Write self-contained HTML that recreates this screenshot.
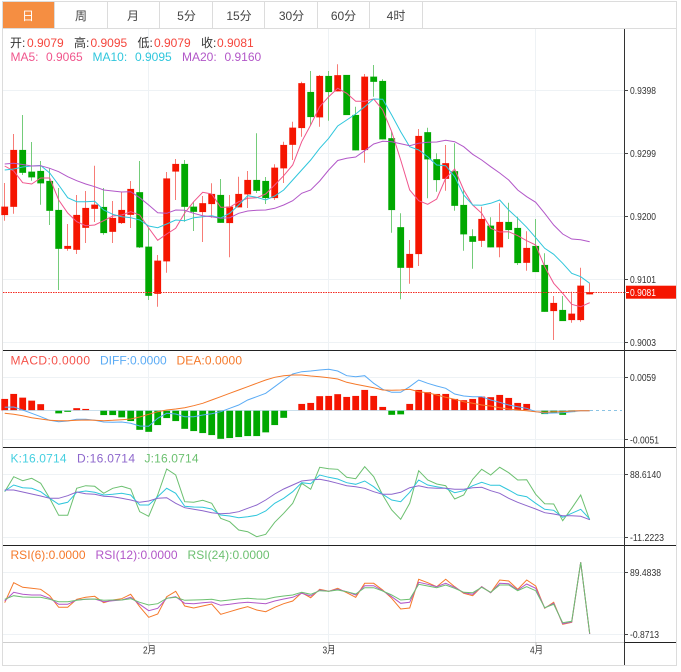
<!DOCTYPE html>
<html><head><meta charset="utf-8"><style>
html,body{margin:0;padding:0;background:#fff;width:681px;height:672px;overflow:hidden}
svg{display:block}
text{font-family:"Liberation Sans","Noto Sans CJK SC",sans-serif}
.l{font-size:12px}
.a{font-size:10px;fill:#333}
.t{font-size:12px;fill:#444;text-anchor:middle}
polyline{fill:none;stroke-width:1}
</style></head><body>
<svg width="681" height="672" viewBox="0 0 681 672" xmlns="http://www.w3.org/2000/svg">
<rect width="681" height="672" fill="#fff"/>
<!-- tabs -->
<rect x="3" y="2" width="51" height="26" fill="#f58e42"/>
<path d="M2.5 1.5H676.5V665.5H2.5ZM2.5 28.5H676.5M54.5 2V28M107.5 2V28M159.5 2V28M212.5 2V28M264.5 2V28M317.5 2V28M369.5 2V28M422.5 2V28" fill="none" stroke="#dcdcdc" stroke-width="1"/>
<text class="t" x="28" y="20" style="fill:#fff">日</text>
<text class="t" x="81" y="20">周</text>
<text class="t" x="133" y="20">月</text>
<text class="t" x="186.5" y="20">5分</text>
<text class="t" x="239" y="20">15分</text>
<text class="t" x="291.5" y="20">30分</text>
<text class="t" x="343.5" y="20">60分</text>
<text class="t" x="396" y="20">4时</text>
<!-- grid -->
<path d="M3 90.5H624M3 153.5H624M3 216.5H624M3 279.5H624M3 342.5H624M3 377.5H624M3 439.5H624M3 474.5H624M3 537.5H624M3 572.5H624M3 634.5H624M148.5 29V642M328.5 29V642M535.5 29V642" stroke="#eef2f5" fill="none"/>
<!-- legend -->
<text class="l" x="10" y="47" fill="#333">开:</text><text class="l" x="27" y="47" fill="#f5453c">0.9079</text>
<text class="l" x="74" y="47" fill="#333">高:</text><text class="l" x="90.5" y="47" fill="#f5453c">0.9095</text>
<text class="l" x="137.5" y="47" fill="#333">低:</text><text class="l" x="154" y="47" fill="#f5453c">0.9079</text>
<text class="l" x="201" y="47" fill="#333">收:</text><text class="l" x="217" y="47" fill="#f5453c">0.9081</text>
<text class="l" x="10.5" y="61" fill="#f0558c">MA5:</text><text class="l" x="46" y="61" fill="#f0558c">0.9065</text>
<text class="l" x="92.5" y="61" fill="#2fc6dc">MA10:</text><text class="l" x="135" y="61" fill="#2fc6dc">0.9095</text>
<text class="l" x="182" y="61" fill="#b257c8">MA20:</text><text class="l" x="224.5" y="61" fill="#b257c8">0.9160</text>
<!-- wicks red -->
<path stroke="#f77c76" fill="none" d="M4.5 183V220.7M13.5 134V213.7M67.5 224V250.7M76.5 195V254M85.5 191V243M94.5 165.7V222M112.5 201V243M121.5 192V224M130.5 181V228M157.5 255V306.7M166.5 172V272.7M175.5 159V200M202.5 196V242M211.5 183.3V217.7M229.5 195V257.3M238.5 176.7V207.3M247.5 171V208M274.5 164.3V200M283.5 141.7V183M292.5 121.7V160M301.5 81.7V136.7M319.5 75V126.7M337.5 64.3V91.3M364.5 74V162.7M409.5 240V283.7M418.5 129V266M445.5 145V190.7M481.5 206.7V247M499.5 203.3V257.3M526.5 231.3V270.7M553.5 296V340M571.5 291.7V322.7M580.5 267.7V321.7M589.5 283.3V294.3"/>
<!-- wicks green -->
<path stroke="#74cc7a" fill="none" d="M22.5 115V175M31.5 142V180.7M40.5 161V204.7M49.5 168V225M58.5 188V290M103.5 188V234.7M139.5 161V248M148.5 228V300M184.5 160V221.7M193.5 202V231M220.5 179V222.7M256.5 133.3V193M265.5 177V204M310.5 71V125M328.5 71V120.7M346.5 75V115M355.5 106.7V150.3M373.5 65V96.7M382.5 79.3V139.3M391.5 131.7V232.7M400.5 213.3V299.3M427.5 127.7V198.3M436.5 153.3V191.7M454.5 143.3V210.7M463.5 189V250.7M472.5 229.3V268.7M490.5 217.3V247.3M508.5 202.7V239M517.5 216.7V265M535.5 219V272M544.5 253.3V311.7M562.5 296V321"/>
<!-- bodies red -->
<path fill="#f51500" stroke="#f51500" stroke-opacity=".35" stroke-width=".6" d="M1.4 206.7h6.6V215h-6.6zM10.4 150h6.6V206.7h-6.6zM64.4 246h6.6V248.7h-6.6zM73.4 215h6.6V249.7h-6.6zM82.4 208h6.6V227.7h-6.6zM91.4 204.7h6.6V208.7h-6.6zM109.4 218h6.6V231.7h-6.6zM118.4 210h6.6V223h-6.6zM127.4 189h6.6V214.7h-6.6zM154.4 260.7h6.6V293.7h-6.6zM163.4 178.5h6.6V261.3h-6.6zM172.4 164h6.6V171.5h-6.6zM199.4 203.3h6.6V212h-6.6zM208.4 194h6.6V204h-6.6zM226.4 206.7h6.6V223h-6.6zM235.4 194h6.6V207.3h-6.6zM244.4 180h6.6V194.3h-6.6zM271.4 167.7h6.6V198h-6.6zM280.4 145h6.6V168.3h-6.6zM289.4 127.7h6.6V144.7h-6.6zM298.4 83.3h6.6V128h-6.6zM316.4 76h6.6V117.3h-6.6zM334.4 75.3h6.6V91.3h-6.6zM361.4 76.7h6.6V150h-6.6zM406.4 254h6.6V267.7h-6.6zM415.4 136h6.6V254h-6.6zM442.4 163.3h6.6V178.7h-6.6zM478.4 219h6.6V240.7h-6.6zM496.4 222h6.6V247.3h-6.6zM523.4 248h6.6V262.7h-6.6zM550.4 303h6.6V311h-6.6zM568.4 313.7h6.6V320h-6.6zM577.4 285.7h6.6V320h-6.6zM586.4 292.3h6.6V294.3h-6.6z"/>
<!-- bodies green -->
<path fill="#00a800" stroke="#00a800" stroke-opacity=".35" stroke-width=".6" d="M19.4 150h6.6V172.7h-6.6zM28.4 171.7h6.6V177.3h-6.6zM37.4 171h6.6V183.3h-6.6zM46.4 181h6.6V210.7h-6.6zM55.4 210h6.6V248.7h-6.6zM100.4 207h6.6V233h-6.6zM136.4 192.3h6.6V247.3h-6.6zM145.4 246.7h6.6V295.7h-6.6zM181.4 164h6.6V206.7h-6.6zM190.4 206.7h6.6V211.7h-6.6zM217.4 195h6.6V222.7h-6.6zM253.4 180h6.6V190.7h-6.6zM262.4 181h6.6V198h-6.6zM307.4 92h6.6V117h-6.6zM325.4 76h6.6V92h-6.6zM343.4 75h6.6V115h-6.6zM352.4 115h6.6V150.3h-6.6zM370.4 76.7h6.6V81.7h-6.6zM379.4 81h6.6V139.3h-6.6zM388.4 138.3h6.6V210h-6.6zM397.4 227.3h6.6V267.7h-6.6zM424.4 132.3h6.6V159.3h-6.6zM433.4 159.3h6.6V180h-6.6zM451.4 171.3h6.6V205.7h-6.6zM460.4 205h6.6V234.3h-6.6zM469.4 236.3h6.6V241.7h-6.6zM487.4 225.7h6.6V247.3h-6.6zM505.4 222h6.6V230h-6.6zM514.4 228h6.6V263h-6.6zM532.4 246h6.6V272h-6.6zM541.4 265h6.6V311.7h-6.6zM559.4 310h6.6V321h-6.6z"/>
<!-- MA lines -->
<polyline stroke="#f0558c" points="4.7,166 13.7,171 22.7,182.7 31.7,184 40.7,178 49.7,178 58.7,200 67.7,213 76.7,221.7 85.7,225.7 94.7,225 103.7,220.7 112.7,216 121.7,215 130.7,211.7 139.7,215 148.7,228 157.7,240.3 166.7,234 175.7,228.3 184.7,213 193.7,201.7 202.7,192.3 211.7,194 220.7,207.3 229.7,207.3 238.7,201.7 247.7,198.3 256.7,197.7 265.7,194 274.7,185 283.7,175.7 292.7,165 301.7,141.7 310.7,125 319.7,106.7 328.7,96.7 337.7,88.3 346.7,93.3 355.7,101.3 364.7,101.3 373.7,99 382.7,110 391.7,131.7 400.7,160 409.7,190 418.7,200.7 427.7,204.3 436.7,199 445.7,178.3 454.7,169 463.7,190 472.7,205 481.7,213.3 490.7,228.3 499.7,232 508.7,231.7 517.7,235.7 526.7,240.7 535.7,245 544.7,266.7 553.7,283.3 562.7,293.3 571.7,304.3 580.7,306.7 589.7,302.7"/>
<polyline stroke="#2fc6dc" points="4.7,170 13.7,169 22.7,167 31.7,166 40.7,165.5 49.7,173 58.7,185 67.7,197.7 76.7,201.7 85.7,201.7 94.7,201.3 103.7,210 112.7,214.3 121.7,216.7 130.7,217.7 139.7,220 148.7,226 157.7,227.7 166.7,224 175.7,220 184.7,220.7 193.7,217.7 202.7,216.7 211.7,215.7 220.7,218 229.7,213.3 238.7,205 247.7,195.7 256.7,197.3 265.7,200 274.7,196 283.7,190 292.7,180 301.7,170 310.7,160 319.7,148.3 328.7,138.3 337.7,126 346.7,120 355.7,114 364.7,106.7 373.7,99 382.7,99.3 391.7,115 400.7,131.7 409.7,146.7 418.7,150 427.7,156.7 436.7,165 445.7,165.7 454.7,176.7 463.7,195 472.7,205 481.7,205.3 490.7,203.3 499.7,200 508.7,210 517.7,218.3 526.7,227.3 535.7,237.7 544.7,248.3 553.7,254.3 562.7,263.3 571.7,273.3 580.7,276.7 589.7,283.3"/>
<polyline stroke="#b257c8" points="4.7,164 13.7,163.3 22.7,164.5 31.7,166 40.7,165.7 49.7,168.3 58.7,171.7 67.7,176.7 76.7,180.7 85.7,184 94.7,186.7 103.7,190 112.7,191 121.7,192 130.7,191.7 139.7,197.7 148.7,205 157.7,212.7 166.7,213.3 175.7,210 184.7,210.3 193.7,213.3 202.7,215.7 211.7,216.7 220.7,218.3 229.7,217.7 238.7,213.3 247.7,211 256.7,210.3 265.7,210 274.7,208.3 283.7,205 292.7,200.7 301.7,193.3 310.7,190 319.7,181 328.7,170 337.7,160.5 346.7,158.3 355.7,157 364.7,150.7 373.7,144 382.7,141.3 391.7,141.7 400.7,143.7 409.7,145.7 418.7,143.3 427.7,142.3 436.7,142 445.7,140.3 454.7,141.7 463.7,146.7 472.7,154.3 481.7,160 490.7,166.7 499.7,173 508.7,180 517.7,190 526.7,196.7 535.7,202.3 544.7,213.3 553.7,225 562.7,234 571.7,239 580.7,239.7 589.7,241.7"/>
<!-- price line -->
<path d="M3 292.5H626" stroke="#f52a20" stroke-dasharray="1.5 1" fill="none"/>
<!-- MACD bars -->
<path fill="#f51500" stroke="#f51500" stroke-opacity=".3" stroke-width=".6" d="M1.4 399h6.6V410.3h-6.6zM10.4 394h6.6V410.3h-6.6zM19.4 397.7h6.6V410.3h-6.6zM28.4 400.7h6.6V410.3h-6.6zM37.4 404.3h6.6V410.3h-6.6zM73.4 408.3h6.6V410.3h-6.6zM82.4 409h6.6V410.3h-6.6zM298.4 404h6.6V410.3h-6.6zM307.4 403h6.6V410.3h-6.6zM316.4 396.3h6.6V410.3h-6.6zM325.4 396h6.6V410.3h-6.6zM334.4 394.3h6.6V410.3h-6.6zM343.4 397h6.6V410.3h-6.6zM352.4 396h6.6V410.3h-6.6zM361.4 390h6.6V410.3h-6.6zM370.4 396h6.6V410.3h-6.6zM379.4 407h6.6V410.3h-6.6zM406.4 404h6.6V410.3h-6.6zM415.4 390h6.6V410.3h-6.6zM424.4 392.3h6.6V410.3h-6.6zM433.4 394h6.6V410.3h-6.6zM442.4 394h6.6V410.3h-6.6zM451.4 399h6.6V410.3h-6.6zM460.4 400.3h6.6V410.3h-6.6zM469.4 399h6.6V410.3h-6.6zM478.4 396.7h6.6V410.3h-6.6zM487.4 397.3h6.6V410.3h-6.6zM496.4 395h6.6V410.3h-6.6zM505.4 398h6.6V410.3h-6.6zM514.4 403h6.6V410.3h-6.6zM523.4 404h6.6V410.3h-6.6z"/>
<path fill="#00a800" stroke="#00a800" stroke-opacity=".3" stroke-width=".6" d="M55.4 410.3h6.6V413.3h-6.6zM64.4 410.3h6.6V411.7h-6.6zM100.4 410.3h6.6V415h-6.6zM109.4 410.3h6.6V415h-6.6zM118.4 410.3h6.6V417.3h-6.6zM127.4 410.3h6.6V421h-6.6zM136.4 410.3h6.6V429.7h-6.6zM145.4 410.3h6.6V431.7h-6.6zM154.4 410.3h6.6V425h-6.6zM163.4 410.3h6.6V418h-6.6zM172.4 410.3h6.6V421h-6.6zM181.4 410.3h6.6V428.7h-6.6zM190.4 410.3h6.6V431h-6.6zM199.4 410.3h6.6V433h-6.6zM208.4 410.3h6.6V435h-6.6zM217.4 410.3h6.6V438.7h-6.6zM226.4 410.3h6.6V438h-6.6zM235.4 410.3h6.6V437h-6.6zM244.4 410.3h6.6V436h-6.6zM253.4 410.3h6.6V436h-6.6zM262.4 410.3h6.6V432.3h-6.6zM271.4 410.3h6.6V425h-6.6zM280.4 410.3h6.6V417.7h-6.6zM388.4 410.3h6.6V414.7h-6.6zM397.4 410.3h6.6V414.3h-6.6zM541.4 410.3h6.6V414h-6.6zM550.4 410.3h6.6V413h-6.6zM559.4 410.3h6.6V414.7h-6.6zM568.4 410.3h6.6V412h-6.6z"/>
<path d="M3 410.5H590" stroke="#b9d5e6" stroke-width=".7" fill="none"/>
<path d="M590 410.5H622" stroke="#8cc4e4" stroke-dasharray="3 3" fill="none"/>
<polyline stroke="#5aabf5" points="4.7,407.3 13.7,407 22.7,410 31.7,413.3 40.7,416.7 49.7,420.3 58.7,421.7 67.7,421 76.7,419.3 85.7,419.3 94.7,420.3 103.7,422 112.7,422.3 121.7,422 130.7,423.3 139.7,426 148.7,426.3 157.7,418.3 166.7,413.3 175.7,414 184.7,416.7 193.7,416.7 202.7,415 211.7,413.7 220.7,411.7 229.7,408.3 238.7,405 247.7,400 256.7,396.7 265.7,393.3 274.7,386.7 283.7,380 292.7,374 301.7,371.7 310.7,371 319.7,370 328.7,369.3 337.7,371 346.7,375.7 355.7,376.7 364.7,375.7 373.7,383.3 382.7,389.3 391.7,392.3 400.7,392.3 409.7,386.7 418.7,380 427.7,383.3 436.7,386 445.7,388.3 454.7,394 463.7,396 472.7,396.7 481.7,396.7 490.7,400 499.7,402.3 508.7,405 517.7,406.7 526.7,408.3 535.7,411.7 544.7,413.3 553.7,413 562.7,412.7 571.7,411.7 580.7,410.7 589.7,410.7"/>
<polyline stroke="#f5792a" points="4.7,413.3 13.7,414.3 22.7,415.7 31.7,417.7 40.7,419 49.7,420.3 58.7,420.7 67.7,420.7 76.7,420.3 85.7,420 94.7,420.3 103.7,420.7 112.7,420.3 121.7,419.7 130.7,419 139.7,417 148.7,414.3 157.7,411.7 166.7,410 175.7,409 184.7,407.7 193.7,405.7 202.7,403.3 211.7,400 220.7,396.7 229.7,393.3 238.7,390 247.7,386.7 256.7,383.3 265.7,380 274.7,377.3 283.7,375.7 292.7,375 301.7,375 310.7,376 319.7,376.7 328.7,377.7 337.7,379 346.7,382.3 355.7,384.3 364.7,386 373.7,387.7 382.7,390 391.7,390.3 400.7,390 409.7,389.3 418.7,391.7 427.7,392.7 436.7,395 445.7,397.3 454.7,399.3 463.7,401.7 472.7,403.3 481.7,405 490.7,406 499.7,407.7 508.7,409 517.7,410 526.7,410.7 535.7,411.7 544.7,412.3 553.7,411.7 562.7,411.7 571.7,411 580.7,410.7 589.7,410.7"/>
<text class="l" x="10.5" y="364.5" fill="#f5524a" textLength="79.5">MACD:0.0000</text>
<text class="l" x="100" y="364.5" fill="#5aabf5" textLength="66.7">DIFF:0.0000</text>
<text class="l" x="176.5" y="364.5" fill="#f5792a" textLength="65.5">DEA:0.0000</text>
<!-- KDJ -->
<polyline stroke="#6cc070" points="4.7,491.7 13.7,476.7 22.7,480.7 31.7,478.3 40.7,483.3 49.7,498.3 58.7,515.3 67.7,515.3 76.7,488.3 85.7,485.7 94.7,486.3 103.7,493.3 112.7,488.3 121.7,486.3 130.7,489 139.7,511.7 148.7,516.3 157.7,495 166.7,469 175.7,475 184.7,501.7 193.7,502.3 202.7,500.3 211.7,503.3 220.7,518.3 229.7,521.7 238.7,530 247.7,531.7 256.7,536.7 265.7,534.3 274.7,522.3 283.7,513.3 292.7,503.3 301.7,483.3 310.7,489.3 319.7,467.3 328.7,468.7 337.7,469.3 346.7,477.3 355.7,478.7 364.7,466.7 373.7,476.7 382.7,495 391.7,510 400.7,519.3 409.7,503.3 418.7,470.7 427.7,480 436.7,484 445.7,485.7 454.7,499 463.7,495 472.7,479.3 481.7,469.3 490.7,475 499.7,467.3 508.7,472.7 517.7,480 526.7,479.7 535.7,494.3 544.7,503.7 553.7,504 562.7,520.7 571.7,508.3 580.7,495 589.7,520"/>
<polyline stroke="#2fc6dc" points="4.7,491 13.7,485 22.7,487.7 31.7,488.3 40.7,491.7 49.7,498.3 58.7,504.3 67.7,502.3 76.7,492.3 85.7,491 94.7,492.3 103.7,495 112.7,494.3 121.7,493.3 130.7,495 139.7,505 148.7,505 157.7,496.7 166.7,488.3 175.7,493.3 184.7,506.3 193.7,507 202.7,507.3 211.7,509 220.7,515 229.7,516 238.7,517.7 247.7,516.7 256.7,515.3 265.7,511 274.7,503.3 283.7,498.3 292.7,491.7 301.7,482.7 310.7,483.7 319.7,475 328.7,477.3 337.7,479 346.7,482.7 355.7,484.3 364.7,481 373.7,486.7 382.7,494.3 391.7,500 400.7,501.7 409.7,492.3 418.7,480 427.7,485 436.7,486.7 445.7,488.3 454.7,492.7 463.7,490.7 472.7,485.7 481.7,482.3 490.7,485.3 499.7,485.3 508.7,490 517.7,495 526.7,496.7 535.7,503.3 544.7,509.3 553.7,510.3 562.7,517.3 571.7,513.3 580.7,509.3 589.7,519"/>
<polyline stroke="#8d66cc" points="4.7,490 13.7,490 22.7,492 31.7,494 40.7,496 49.7,498.3 58.7,498.3 67.7,495.7 76.7,492 85.7,493.7 94.7,494.3 103.7,496.3 112.7,496.7 121.7,498.3 130.7,500 139.7,502.3 148.7,501 157.7,498.3 166.7,497.7 175.7,503.3 184.7,507.7 193.7,509.3 202.7,510.7 211.7,512.7 220.7,513.7 229.7,513.3 238.7,511.7 247.7,508.3 256.7,505 265.7,500 274.7,494 283.7,489 292.7,485 301.7,481 310.7,480 319.7,479.3 328.7,481 337.7,483.3 346.7,485.7 355.7,486.7 364.7,488.3 373.7,491.7 382.7,494.3 391.7,494.3 400.7,492.3 409.7,487.7 418.7,485.7 427.7,487.7 436.7,488.3 445.7,488.3 454.7,489.3 463.7,489.3 472.7,487.7 481.7,487.3 490.7,490.7 499.7,493.3 508.7,498.3 517.7,502.3 526.7,505.7 535.7,509 544.7,512.7 553.7,514 562.7,515.7 571.7,515.7 580.7,516.3 589.7,519.7"/>
<text class="l" x="10.5" y="462.5" fill="#45cfe0" textLength="56">K:16.0714</text>
<text class="l" x="77" y="462.5" fill="#8d66cc" textLength="58">D:16.0714</text>
<text class="l" x="144.5" y="462.5" fill="#6cc070" textLength="54">J:16.0714</text>
<!-- RSI -->
<polyline stroke="#f5792a" points="4.7,602.7 13.7,582.7 22.7,587.3 31.7,588.3 40.7,589.3 49.7,595.7 58.7,607.3 67.7,607.3 76.7,599.3 85.7,597.3 94.7,596.3 103.7,602.7 112.7,600 121.7,598.7 130.7,594.3 139.7,606.7 148.7,617.3 157.7,614 166.7,596.7 175.7,591.3 184.7,606 193.7,608 202.7,606 211.7,604 220.7,614.3 229.7,611.7 238.7,609 247.7,606.7 256.7,610 265.7,611.7 274.7,607.3 283.7,603.7 292.7,601 301.7,592.7 310.7,597.7 319.7,589.3 328.7,591.3 337.7,588.3 346.7,592.7 355.7,597.3 364.7,583.3 373.7,583.3 382.7,590 391.7,598.3 400.7,609 409.7,608 418.7,579.3 427.7,582.7 436.7,586.7 445.7,579.3 454.7,586.7 463.7,593.3 472.7,595.7 481.7,586.7 490.7,592.7 499.7,580 508.7,581 517.7,589.3 526.7,580 535.7,586 544.7,608.3 553.7,602.3 562.7,624.3 571.7,622.3 580.7,562.3 589.7,634"/>
<polyline stroke="#b257c8" points="4.7,601 13.7,592.3 22.7,594.3 31.7,595 40.7,595 49.7,598.3 58.7,604.3 67.7,604.3 76.7,600 85.7,599.3 94.7,599 103.7,601.7 112.7,600.7 121.7,600 130.7,597.3 139.7,604.3 148.7,610.7 157.7,608.3 166.7,598.3 175.7,596.7 184.7,603.3 193.7,603.7 202.7,602.7 211.7,602 220.7,605.3 229.7,604.3 238.7,603 247.7,602.3 256.7,603 265.7,603.7 274.7,601 283.7,599 292.7,597.3 301.7,593.3 310.7,596 319.7,590 328.7,591.3 337.7,589.3 346.7,591.7 355.7,595 364.7,585.7 373.7,585.7 382.7,590.7 391.7,596.7 400.7,603.3 409.7,602.3 418.7,582.3 427.7,584.3 436.7,586.7 445.7,583.3 454.7,587.3 463.7,592.7 472.7,594.3 481.7,586.7 490.7,592.7 499.7,583.3 508.7,583.7 517.7,590 526.7,584 535.7,588.3 544.7,608 553.7,603.3 562.7,623.7 571.7,622 580.7,562.3 589.7,634"/>
<polyline stroke="#6cc070" points="4.7,599.3 13.7,595.7 22.7,597 31.7,597.3 40.7,597.3 49.7,599.3 58.7,601.7 67.7,601.7 76.7,600.3 85.7,599.3 94.7,599 103.7,600.3 112.7,600 121.7,600 130.7,598.7 139.7,602.3 148.7,605 157.7,603.7 166.7,598.3 175.7,597.3 184.7,600.3 193.7,600 202.7,599.7 211.7,599.3 220.7,601 229.7,600 238.7,599 247.7,598.3 256.7,599 265.7,599.3 274.7,597.3 283.7,596 292.7,595 301.7,592.3 310.7,594.3 319.7,590.7 328.7,591.3 337.7,590 346.7,591.7 355.7,594 364.7,587.7 373.7,587.7 382.7,591 391.7,595 400.7,600 409.7,599.3 418.7,584.3 427.7,586 436.7,587.7 445.7,585 454.7,588.3 463.7,592.3 472.7,592.7 481.7,587.3 490.7,592.3 499.7,585 508.7,585 517.7,590.7 526.7,586.7 535.7,590.7 544.7,607.7 553.7,604.3 562.7,622.7 571.7,621.3 580.7,562.3 589.7,633.3"/>
<text class="l" x="10.5" y="559" fill="#f5792a" textLength="75">RSI(6):0.0000</text>
<text class="l" x="95.5" y="559" fill="#b257c8" textLength="82">RSI(12):0.0000</text>
<text class="l" x="187.5" y="559" fill="#6cc070" textLength="82">RSI(24):0.0000</text>
<!-- frame lines -->
<path d="M3 350.5H676M3 447.5H676M3 545.5H676M624 642.5H676" stroke="#222" fill="none"/>
<path d="M3 642.5H624" stroke="#cfcfcf" fill="none"/>
<path d="M624.5 29V665" stroke="#333" fill="none"/>
<path d="M149 642V646M329 642V646M536 642V646" stroke="#bbb" fill="none"/>
<!-- axis ticks -->
<path d="M624 90.5H628M624 153.5H628M624 216.5H628M624 279.5H628M624 342.5H628M624 377.5H628M624 439.5H628M624 474.5H628M624 537.5H628M624 572.5H628M624 634.5H628" stroke="#444" fill="none"/>
<rect x="626" y="285.7" width="50" height="13" fill="#f51500"/>
<path d="M626 292.5H629" stroke="#fff" fill="none"/>
<text class="a" x="630" y="94" textLength="26" lengthAdjust="spacingAndGlyphs">0.9398</text>
<text class="a" x="630" y="157" textLength="26" lengthAdjust="spacingAndGlyphs">0.9299</text>
<text class="a" x="630" y="220" textLength="26" lengthAdjust="spacingAndGlyphs">0.9200</text>
<text class="a" x="630" y="283" textLength="26" lengthAdjust="spacingAndGlyphs">0.9101</text>
<text class="a" x="630" y="296" textLength="26" lengthAdjust="spacingAndGlyphs" style="fill:#fff">0.9081</text>
<text class="a" x="630" y="346" textLength="26" lengthAdjust="spacingAndGlyphs">0.9003</text>
<text class="a" x="630" y="381" textLength="26" lengthAdjust="spacingAndGlyphs">0.0059</text>
<text class="a" x="630" y="443.5" textLength="29" lengthAdjust="spacingAndGlyphs">-0.0051</text>
<text class="a" x="630" y="478" textLength="31" lengthAdjust="spacingAndGlyphs">88.6140</text>
<text class="a" x="630" y="541" textLength="34" lengthAdjust="spacingAndGlyphs">-11.2223</text>
<text class="a" x="630" y="576" textLength="31" lengthAdjust="spacingAndGlyphs">89.4838</text>
<text class="a" x="630" y="638" textLength="29" lengthAdjust="spacingAndGlyphs">-0.8713</text>
<text class="a" x="143" y="653.5" textLength="13" lengthAdjust="spacingAndGlyphs">2月</text>
<text class="a" x="322.5" y="653.5" textLength="13" lengthAdjust="spacingAndGlyphs">3月</text>
<text class="a" x="530" y="653.5" textLength="13" lengthAdjust="spacingAndGlyphs">4月</text>
</svg>
</body></html>
